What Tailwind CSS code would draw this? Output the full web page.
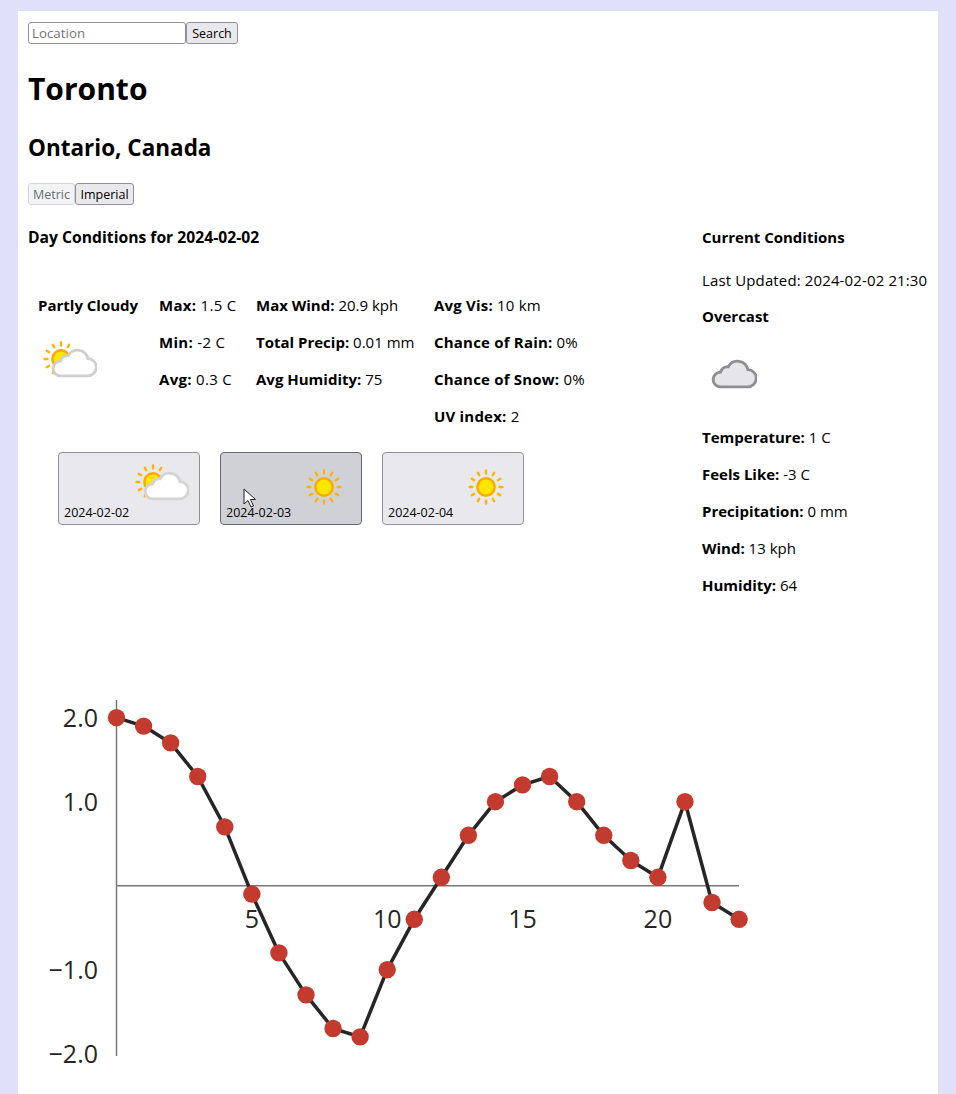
<!DOCTYPE html>
<html lang="en">
<head>
    <meta charset="UTF-8">
    <meta name="viewport" content="width=device-width, initial-scale=1.0">
    <title>Weather</title>
    <script src="https://cdn.jsdelivr.net/npm/@tailwindcss/browser@4"></script>
</head>
<body class="h-screen overflow-hidden bg-[#e0e0f8] text-black font-['Open_Sans',sans-serif] text-[15px] leading-[21px]">
    <svg class="hidden">
        <symbol id="sun" viewBox="0 0 48 48">
            <g stroke="#ffb300" stroke-width="3" stroke-linecap="round">
                <path d="M24 3.200v3.600M24 41.200v3.600M3.200 24h3.600M41.200 24h3.600M32.600 9.100L34.400 6M15.400 9.100L13.600 6M32.600 38.900L34.400 42M15.400 38.900L13.600 42M38.900 15.400L42 13.600M9.100 15.400L6 13.600M38.900 32.600L42 34.400M9.100 32.600L6 34.400"/>
            </g>
            <circle cx="24" cy="24" r="11" fill="#ffe600" stroke="#ffa800" stroke-width="3"/>
        </symbol>
        <symbol id="cloud" viewBox="0 0 48 34">
            <path d="M10 31h28a8.500 8.500 0 0 0 .500-18A11 11 0 0 0 18 10a7.500 7.500 0 0 0-8 5.500a7.750 7.750 0 0 0 0 15.500z" fill="currentColor" stroke="var(--edge)" stroke-width="3"/>
        </symbol>
    </svg>

    <div class="ml-[18px] mt-[11px] w-[920px] h-[1100px] bg-white px-[10px] pt-[11px]">
        <form class="flex h-[22px]">
            <input type="text" placeholder="Location" class="w-[158px] h-[22px] border border-[#8f8f9d] rounded-[3px] px-[3px] text-[13.33px] placeholder:text-[#757575]">
            <button type="button" class="w-[52px] h-[22px] border border-[#8f8f9d] rounded-[3px] bg-[#e9e9ed] text-[12.500px]">Search</button>
        </form>
        <h1 class="mt-[24px] text-[30px] leading-[42px] font-bold">Toronto</h1>
        <h2 class="mt-[22px] text-[22.500px] leading-[32px] font-bold">Ontario, Canada</h2>
        <div class="mt-[19px] flex h-[22px]">
            <button type="button" disabled class="w-[47px] border border-[#d5d5d9] rounded-[3px] bg-[#f4f4f6] text-[#5f7070] text-[12.500px]">Metric</button>
            <button type="button" class="w-[59px] border border-[#8f8f9d] rounded-[3px] bg-[#e9e9ed] text-[12.500px]">Imperial</button>
        </div>

        <div class="mt-[22px] flex h-[440px]">
            <section class="w-[674px] shrink-0">
                <h4 class="font-bold text-[15.700px]">Day Conditions for 2024-02-02</h4>
                <div class="mt-[47px] ml-[10px] flex gap-5">
                    <div class="w-[101px]">
                        <p class="font-bold whitespace-nowrap">Partly Cloudy</p>
                        <svg class="mt-[21px] overflow-visible" width="60" height="44" viewBox="0 0 60 44" style="--edge:#cfcfcf">
                            <use href="#sun" x="4" y="3" width="38" height="38" />
                            <use href="#cloud" x="13" y="9" width="46" height="33" class="text-white" />
                        </svg>
                    </div>
                    <div class="w-[77px] flex flex-col gap-4 whitespace-nowrap tracking-[0.3px]">
                        <p><b>Max:</b> 1.5 C</p>
                        <p><b>Min:</b> -2 C</p>
                        <p><b>Avg:</b> 0.3 C</p>
                    </div>
                    <div class="w-[158px] flex flex-col gap-4 whitespace-nowrap">
                        <p><b>Max Wind:</b> 20.9 kph</p>
                        <p><b>Total Precip:</b> 0.01 mm</p>
                        <p><b>Avg Humidity:</b> 75</p>
                    </div>
                    <div class="flex flex-col gap-4 whitespace-nowrap tracking-[0.2px]">
                        <p><b>Avg Vis:</b> 10 km</p>
                        <p><b>Chance of Rain:</b> 0%</p>
                        <p><b>Chance of Snow:</b> 0%</p>
                        <p><b>UV index:</b> 2</p>
                    </div>
                </div>
                <div class="mt-[25px] ml-[30px] flex gap-5">
                    <button type="button" class="relative w-[142px] h-[73px] border border-[#8f8f9d] rounded-[4px] bg-[#e9e9ed] text-left text-[12.500px]" style="--edge:#d4d4d4">
                        <svg class="absolute left-[71px] top-[7px]" width="60" height="44" viewBox="0 0 60 44">
                            <use href="#sun" x="4" y="3" width="38" height="38" />
                            <use href="#cloud" x="13" y="9" width="46" height="33" class="text-white" />
                        </svg>
                        <span class="absolute left-[5px] bottom-[1px]">2024-02-02</span>
                    </button>
                    <button type="button" class="relative w-[142px] h-[73px] border border-[#676774] rounded-[4px] bg-[#d0d0d7] text-left text-[12.500px]">
                        <svg class="absolute left-[84px] top-[15px]" width="38" height="38"><use href="#sun" width="38" height="38" /></svg>
                        <span class="absolute left-[5px] bottom-[1px]">2024-02-03</span>
                        <svg class="absolute left-[22px] top-[35px]" width="14" height="21" viewBox="0 0 14 21">
                            <path d="M1 1v15l4-3.500 3 6.500 2.500-1-3-6.500h5z" fill="#fff" stroke="#222" stroke-width="1"/>
                        </svg>
                    </button>
                    <button type="button" class="relative w-[142px] h-[73px] border border-[#8f8f9d] rounded-[4px] bg-[#e9e9ed] text-left text-[12.500px]">
                        <svg class="absolute left-[84px] top-[15px]" width="38" height="38"><use href="#sun" width="38" height="38" /></svg>
                        <span class="absolute left-[5px] bottom-[1px]">2024-02-04</span>
                    </button>
                </div>
            </section>
            <aside class="whitespace-nowrap">
                <h4 class="font-bold">Current Conditions</h4>
                <p class="mt-[22px] tracking-[0.13px]">Last Updated: 2024-02-02 21:30</p>
                <p class="mt-[15px] font-bold">Overcast</p>
                <svg class="mt-[30px] ml-[9px] text-[#e6e6ea]" width="46" height="33" style="--edge:#8f8f93"><use href="#cloud" width="46" height="33" /></svg>
                <div class="mt-[37px] flex flex-col gap-4">
                    <p><b>Temperature:</b> 1 C</p>
                    <p><b>Feels Like:</b> -3 C</p>
                    <p><b>Precipitation:</b> 0 mm</p>
                    <p><b>Wind:</b> 13 kph</p>
                    <p><b>Humidity:</b> 64</p>
                </div>
            </aside>
        </div>

        <svg id="chart" class="-ml-[10px] mt-[13px] block" width="920" height="420" viewBox="18 680 920 420"></svg>
    </div>

    <script>
        // hourly temperatures for the selected day
        const temps = [2, 1.9, 1.7, 1.3, 0.7, -0.1, -0.8, -1.3, -1.7, -1.8, -1, -0.4, 0.1, 0.6, 1, 1.2, 1.3, 1, 0.6, 0.3, 0.1, 1, -0.2, -0.4];
        const px = i => 116.5 + i * 27.07;
        const py = v => 885.7 - v * 84;
        let out = `<g font-family="'Open Sans', sans-serif" font-size="25" fill="#262626">`;
        out += `<path d="M116.500 700V1056M116.500 885.700H739" stroke="#777" stroke-width="1.500" fill="none"/>`;
        [[2, '2.0'], [1, '1.0'], [-1, '−1.0'], [-2, '−2.0']].forEach(([v, label]) => {
            out += `<text x="98" y="${py(v) + 9}" text-anchor="end">${label}</text>`;
        });
        [5, 10, 15, 20].forEach(h => {
            out += `<text x="${px(h)}" y="928" text-anchor="middle">${h}</text>`;
        });
        out += `</g><polyline fill="none" stroke="#262626" stroke-width="3.500" stroke-linejoin="round" points="${temps.map((v, i) => px(i) + ',' + py(v)).join(' ')}"/>`;
        temps.forEach((v, i) => {
            out += `<circle cx="${px(i)}" cy="${py(v)}" r="8.700" fill="#c33a2e"/>`;
        });
        document.getElementById('chart').innerHTML = out;
    </script>
</body>
</html>
